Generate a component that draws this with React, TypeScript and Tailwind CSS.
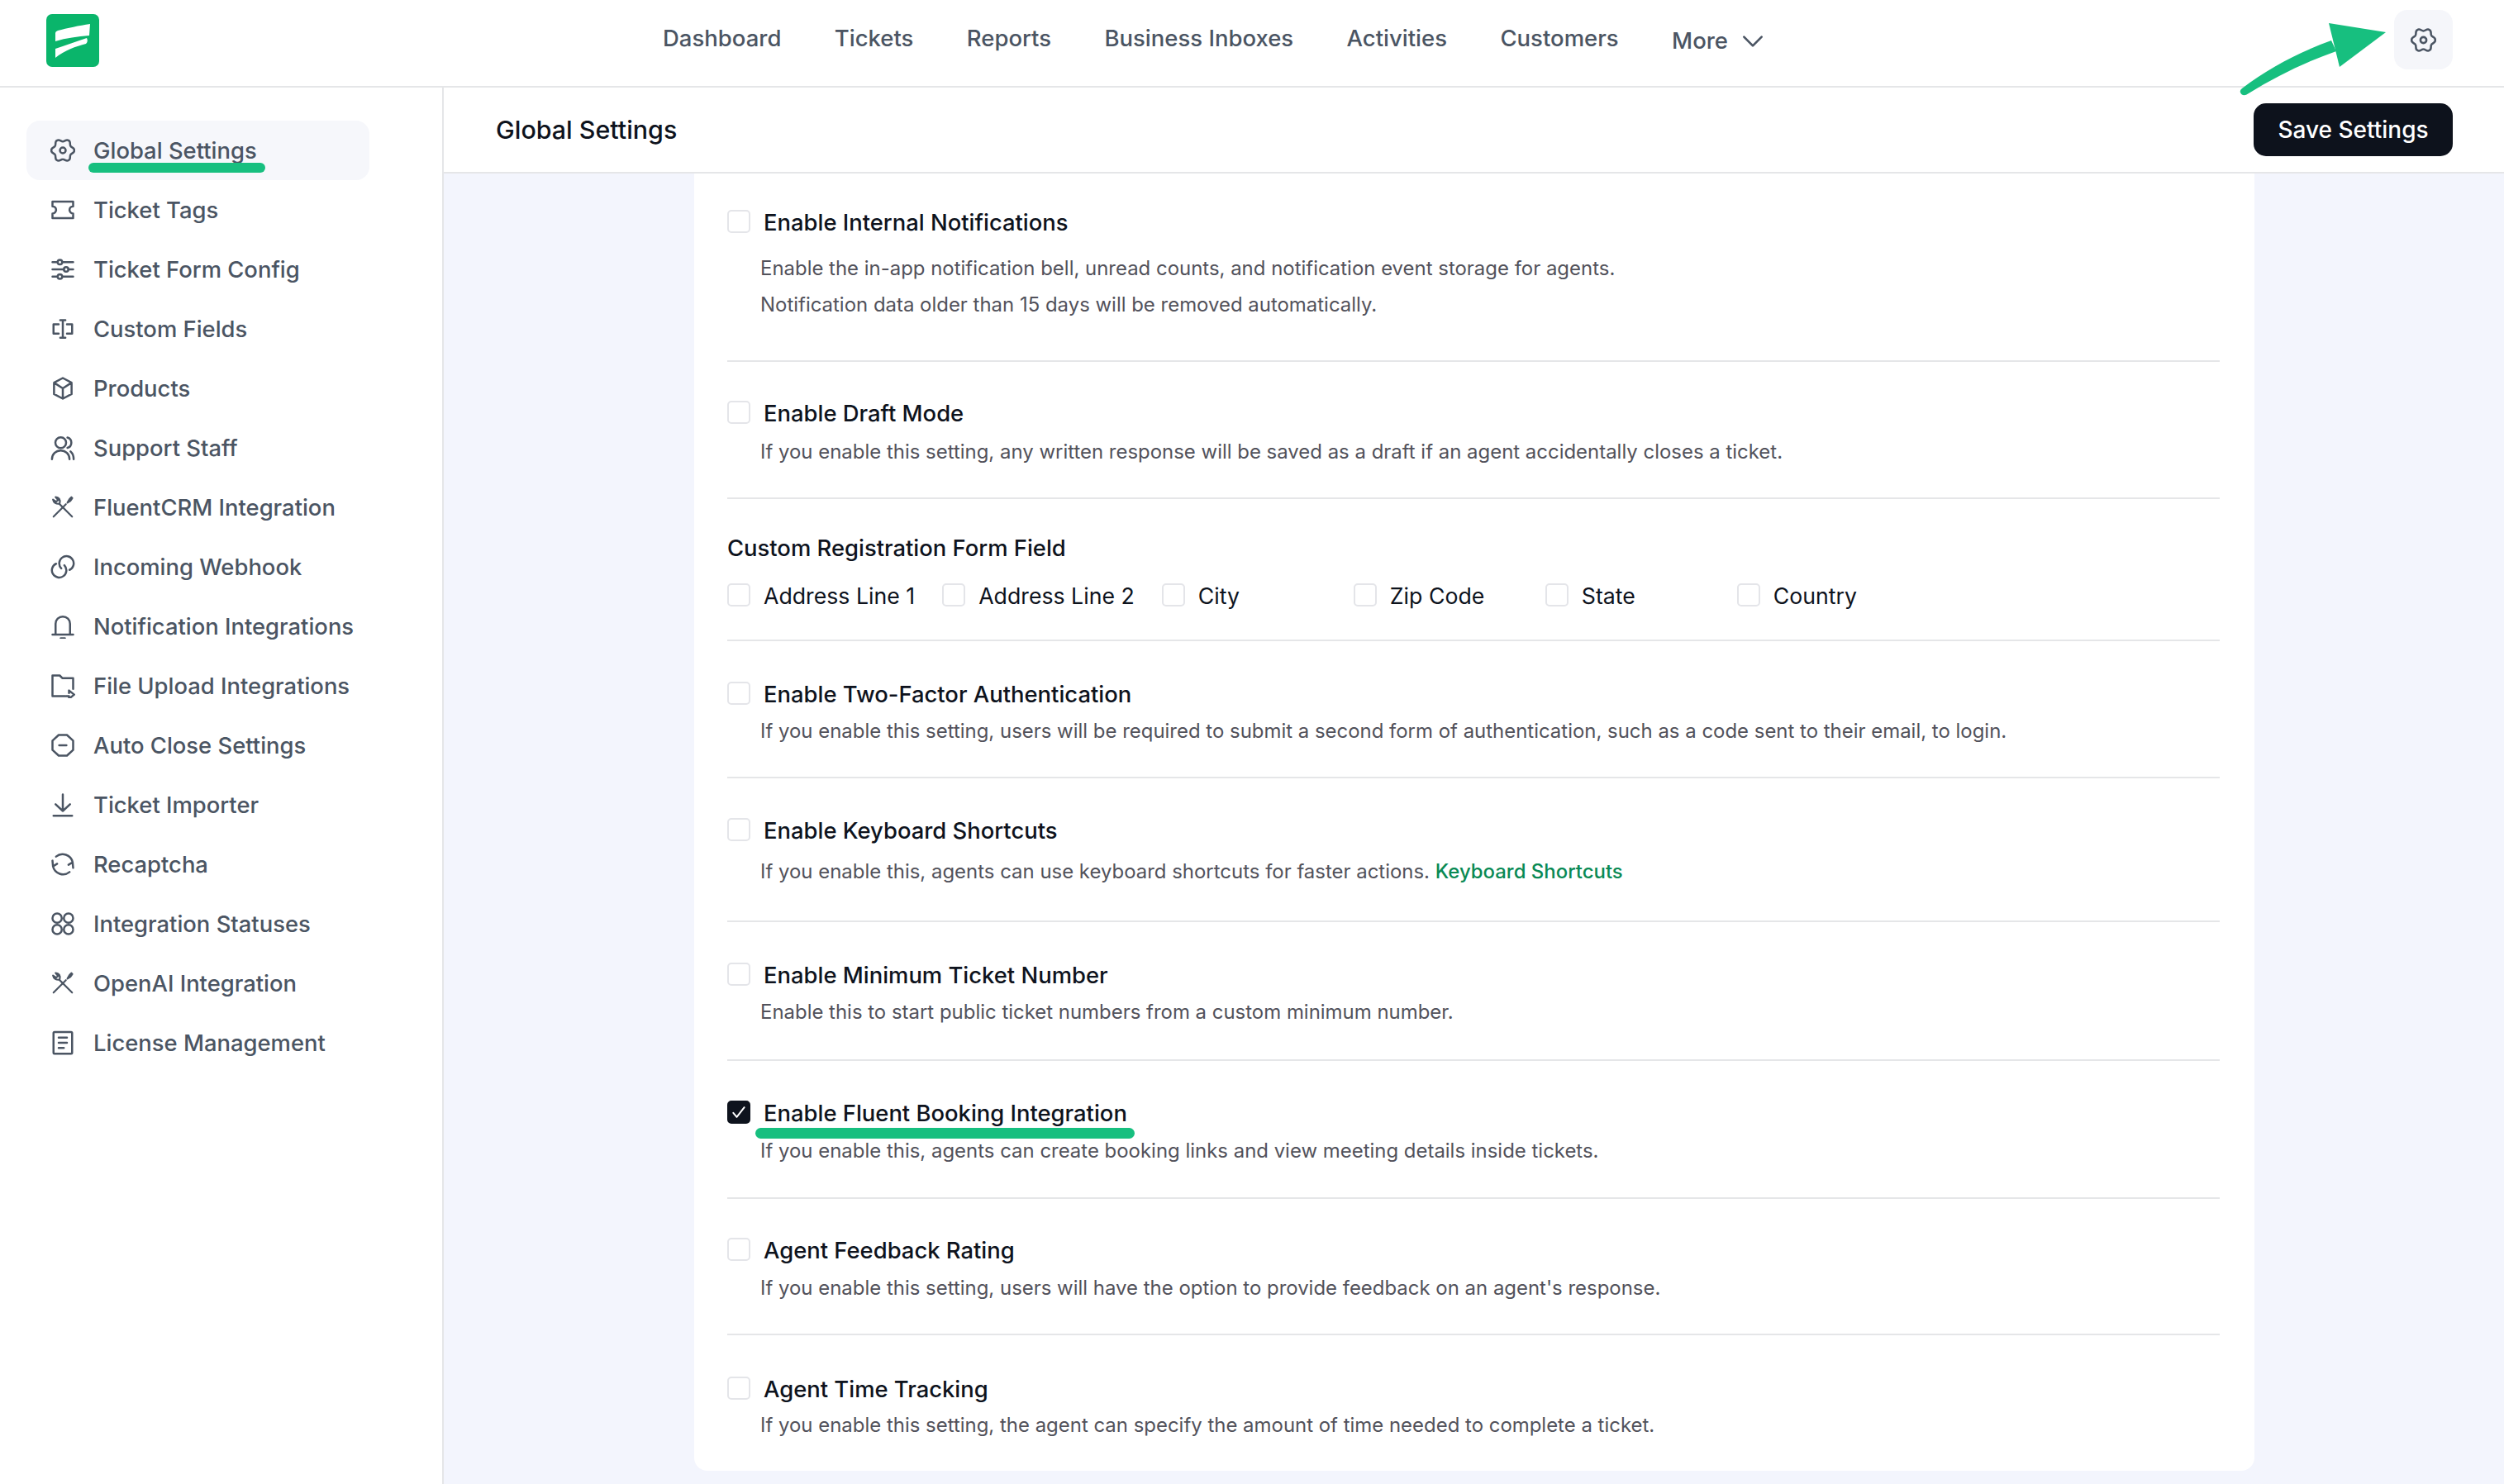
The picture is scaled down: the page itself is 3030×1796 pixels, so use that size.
import type { ReactNode } from 'react';

const wavyGear = (() => {
  // six soft lobes around the centre of a 24 box
  const pt = (deg: number, r: number) => {
    const a = (deg * Math.PI) / 180;
    return `${(12 + r * Math.cos(a)).toFixed(2)} ${(12 + r * Math.sin(a)).toFixed(2)}`;
  };
  let d = `M${pt(0, 11)}`;
  for (let i = 0; i < 6; i++) {
    const s = i * 60;
    d += ` C${pt(s + 12, 12)} ${pt(s + 20, 8.4)} ${pt(s + 30, 8.6)} C${pt(s + 40, 8.4)} ${pt(s + 48, 12)} ${pt(s + 60, 11)}`;
  }
  return d + 'Z';
})();

function Icon({ children, className = 'w-[30px] h-[30px]' }: { children: ReactNode; className?: string }) {
  return (
    <svg
      viewBox="0 0 24 24"
      fill="none"
      stroke="currentColor"
      strokeWidth={2}
      strokeLinecap="round"
      strokeLinejoin="round"
      className={`${className} shrink-0`}
    >
      {children}
    </svg>
  );
}

const GearIcon = () => (
  <>
    <path d={wavyGear} />
    <circle cx="12" cy="12" r="2.800" />
  </>
);

const ToolsIcon = () => (
  <g strokeWidth={1.7}>
    <path d="M21 21 8.500 8.500C6 9 3 7.500 2.500 4.500L5.500 6.500 7.500 5 5 2C8 2 10 4.500 9 8" />
    <path d="M3 21 15 9M16.500 7.500 18.500 4l1.800-1.800.900.900-1.700 2.500z" />
  </g>
);

const NAV_ICONS: Record<string, ReactNode> = {
  'Global Settings': <GearIcon />,
  'Ticket Tags': <path d="M2 4h20v4.500a3.500 3.500 0 0 0 0 7V20H2v-4.500a3.500 3.500 0 0 0 0-7z" />,
  'Ticket Form Config': (
    <>
      <path d="M2 5h5M11.500 5H22M2 12h11M17.500 12H22M2 19h5M11.500 19H22" />
      <circle cx="9.200" cy="5" r="2.200" />
      <circle cx="15.200" cy="12" r="2.200" />
      <circle cx="9.200" cy="19" r="2.200" />
    </>
  ),
  'Custom Fields': (
    <path d="M9.500 3.500h5M9.500 20.500h5M12 3.500v17M8 7.500H3v9h5M16 7.500h5v9h-5" />
  ),
  Products: (
    <path d="M12 2 20.500 6.500v11L12 22l-8.500-4.500v-11zM3.500 6.500 12 12l8.500-5.500M12 12v10" />
  ),
  'Support Staff': (
    <>
      <circle cx="10" cy="7" r="5.200" />
      <path d="M1.500 23a8.500 8.500 0 0 1 17 0M16.500 2a5.200 5.200 0 0 1 0 10M19.500 15.500c1.800 1.600 3 4.200 3 7.500" />
    </>
  ),
  'FluentCRM Integration': <ToolsIcon />,
  'Incoming Webhook': (
    <path d="M10.500 13.500A7 7 0 1 1 18.500 15M13.500 10.500A7 7 0 1 1 5.500 9" />
  ),
  'Notification Integrations': <path d="M5 20V9.500a7 7 0 0 1 14 0V20M2 20h20M10 23.500h4" />,
  'File Upload Integrations': (
    <path d="M22 15V4.500H11.500L9 2H2v20h12M18 16.500l5 4-5 4v-2.500h-3M18 16.500V19" />
  ),
  'Auto Close Settings': (
    <>
      <path d="M8 2h8l6 5.500v9L16 22H8l-6-5.500v-9z" />
      <path d="M8.500 12h7" />
    </>
  ),
  'Ticket Importer': <path d="M12 2v16M5 11.500l7 6.500 7-6.500M3 22.500h18" />,
  Recaptcha: (
    <path d="M5.500 4.500A10 10 0 0 1 21.500 10M18.500 19.500A10 10 0 0 1 2.500 14M2 8.500l.500 5.500 4-2.500M22 15.500l-.500-5.500-4 2.500" />
  ),
  'Integration Statuses': (
    <>
      <circle cx="6.500" cy="6.500" r="4.500" />
      <circle cx="17.500" cy="6.500" r="4.500" />
      <circle cx="6.500" cy="17.500" r="4.500" />
      <circle cx="17.500" cy="17.500" r="4.500" />
    </>
  ),
  'OpenAI Integration': <ToolsIcon />,
  'License Management': (
    <>
      <rect x="3" y="1.500" width="18" height="21" rx="1" />
      <path d="M8 7h8M8 12h8M8 17h5" />
    </>
  ),
};

const NAV_LABELS = Object.keys(NAV_ICONS);

const TOP_LINKS = ['Dashboard', 'Tickets', 'Reports', 'Business Inboxes', 'Activities', 'Customers'];

function Checkbox({ checked = false }: { checked?: boolean }) {
  return (
    <span
      className={`w-[28px] h-[28px] shrink-0 rounded-[5px] flex items-center justify-center border-2 ${
        checked ? 'bg-[#0e131d] border-[#0e131d]' : 'bg-white border-[#e4e5e9]'
      }`}
    >
      {checked && (
        <svg viewBox="0 0 24 24" fill="none" stroke="#fff" strokeWidth={2.4} strokeLinecap="round" strokeLinejoin="round" className="w-[20px] h-[20px]">
          <path d="M4 13l5 6L20 5" />
        </svg>
      )}
    </span>
  );
}

function Setting({
  title,
  checked,
  children,
  className,
  bodyClass,
  underline,
}: {
  title: string;
  checked?: boolean;
  children: ReactNode;
  className: string;
  bodyClass: string;
  underline?: boolean;
}) {
  return (
    <div className={className}>
      <label className="flex items-center gap-[16px] h-[40px]">
        <Checkbox checked={checked} />
        <span className="relative pt-[3px] text-[27.4px] font-medium text-[#0e131d] whitespace-nowrap">
          {title}
          {underline && (
            <span className="absolute left-[-10px] right-[-9px] top-[41px] h-[13px] rounded-full bg-[#17bf7f]" />
          )}
        </span>
      </label>
      <div className={`ml-[40px] pt-[1px] -mb-[1px] text-[23.95px] leading-[44px] text-[#52525b] ${bodyClass}`}>{children}</div>
    </div>
  );
}

export default function App() {
  return (
    <div className="relative h-screen overflow-hidden flex flex-col bg-white font-['Inter',sans-serif]">
      {/* Top bar */}
      <header className="h-[106px] shrink-0 flex items-center border-b-2 border-[#e5e6e8]">
        <div className="ml-[56px] mb-[6px] w-[64px] h-[64px] rounded-[7px] bg-[#0ab56b]">
          <svg viewBox="0 0 64 64" className="w-full h-full" fill="#fff">
            <path d="M11 23Q11 21 14 20C25 17 40 14 53 12L52 26C38 27 24 29 11 33Z" />
            <path d="M11 42C24 38 36 33 49 29Q51 33 48 36C36 39 22 44 11 53Z" />
          </svg>
        </div>
        <nav className="ml-[682px] flex items-center gap-[64.4px] text-[27.5px] font-medium text-[#4b5563] pb-[10px]">
          {TOP_LINKS.map((link) => (
            <a key={link} className="whitespace-nowrap">
              {link}
            </a>
          ))}
          <a className="flex items-center gap-[14px] pt-[6px]">
            More
            <svg viewBox="0 0 24 24" fill="none" stroke="currentColor" strokeWidth={2} strokeLinecap="round" strokeLinejoin="round" className="w-[32px] h-[32px]">
              <path d="M4 8l8 8 8-8" />
            </svg>
          </a>
        </nav>
        <button className="ml-auto mr-[62px] w-[71px] h-[72px] mb-[8px] rounded-[16px] bg-[#f5f6fa] text-[#4b5563] flex items-center justify-center">
          <Icon className="w-[31px] h-[31px]">
            <GearIcon />
          </Icon>
        </button>
      </header>

      <div className="flex-1 flex min-h-0">
        {/* Sidebar */}
        <aside className="w-[537px] shrink-0 border-r-2 border-[#e5e6e8] pt-[40px] pl-[32px]">
          {NAV_LABELS.map((label, i) => (
            <div
              key={label}
              className={`w-[415px] h-[72px] flex items-center gap-[22px] pl-[29px] rounded-[16px] text-[27.4px] font-medium text-[#4b5563] ${
                i === 0 ? 'bg-[#f6f7fb]' : ''
              }`}
            >
              <Icon>{NAV_ICONS[label]}</Icon>
              <span className="relative pt-[2px] whitespace-nowrap">
                {label}
                {i === 0 && (
                  <span className="absolute left-[-6px] right-[-10px] top-[37px] h-[12px] rounded-full bg-[#17bf7f]" />
                )}
              </span>
            </div>
          ))}
        </aside>

        {/* Main */}
        <main className="flex-1 min-w-0 flex flex-col bg-[#f3f5fd]">
          <div className="h-[104px] shrink-0 bg-white border-b-2 border-[#e5e6e8] flex items-center justify-between pl-[63px] pr-[62px]">
            <h1 className="mt-[2px] text-[30.4px] font-medium text-[#0e131d]">Global Settings</h1>
            <button className="w-[241px] h-[64px] rounded-[15px] bg-[#0d121c] text-white text-[28px] font-medium">
              Save Settings
            </button>
          </div>

          <div className="ml-[303px] w-[1888px] h-[1570px] bg-white rounded-b-[16px] pl-[40px] pr-[42px] flex flex-col">
            <Setting title="Enable Internal Notifications" className="pt-[38px] pb-[46px] border-b-2 border-[#e5e6e8]" bodyClass="mt-[14px]">
              <p>Enable the in-app notification bell, unread counts, and notification event storage for agents.</p>
              <p>Notification data older than 15 days will be removed automatically.</p>
            </Setting>

            <Setting title="Enable Draft Mode" className="pt-[41px] pb-[34px] border-b-2 border-[#e5e6e8]" bodyClass="mt-[5px]">
              If you enable this setting, any written response will be saved as a draft if an agent accidentally closes a ticket.
            </Setting>

            <div className="pt-[38px] pb-[34px] border-b-2 border-[#e5e6e8]">
              <h3 className="h-[40px] leading-[42px] text-[27.4px] font-medium text-[#0e131d]">Custom Registration Form Field</h3>
              <div className="mt-[18px] flex gap-[33px] text-[26.7px] text-[#0e131d]">
                {['Address Line 1', 'Address Line 2', 'City', 'Zip Code', 'State', 'Country'].map((f) => (
                  <label key={f} className="flex items-center gap-[16px] h-[40px] min-w-[199px] whitespace-nowrap">
                    <Checkbox />
                    <span className="pt-[2px]">{f}</span>
                  </label>
                ))}
              </div>
            </div>

            <Setting title="Enable Two-Factor Authentication" className="pt-[43px] pb-[34px] border-b-2 border-[#e5e6e8]" bodyClass="mt-[3px]">
              If you enable this setting, users will be required to submit a second form of authentication, such as a code sent to their email, to login.
            </Setting>

            <Setting title="Enable Keyboard Shortcuts" className="pt-[42px] pb-[38px] border-b-2 border-[#e5e6e8]" bodyClass="mt-[8px]">
              If you enable this, agents can use keyboard shortcuts for faster actions.{' '}
              <a className="font-medium text-[#0a8a55]">Keyboard Shortcuts</a>
            </Setting>

            <Setting title="Enable Minimum Ticket Number" className="pt-[43px] pb-[36px] border-b-2 border-[#e5e6e8]" bodyClass="mt-[3px]">
              Enable this to start public ticket numbers from a custom minimum number.
            </Setting>

            <Setting title="Enable Fluent Booking Integration" checked underline className="pt-[42px] pb-[35px] border-b-2 border-[#e5e6e8]" bodyClass="mt-[4px]">
              If you enable this, agents can create booking links and view meeting details inside tickets.
            </Setting>

            <Setting title="Agent Feedback Rating" className="pt-[41px] pb-[34px] border-b-2 border-[#e5e6e8]" bodyClass="mt-[4px]">
              If you enable this setting, users will have the option to provide feedback on an agent's response.
            </Setting>

            <Setting title="Agent Time Tracking" className="pt-[44px]" bodyClass="mt-[2px]">
              If you enable this setting, the agent can specify the amount of time needed to complete a ticket.
            </Setting>
          </div>
        </main>
      </div>

      {/* Annotation arrow pointing at the settings gear */}
      <svg viewBox="0 0 200 100" className="absolute left-[2700px] top-[20px] w-[200px] h-[100px]" fill="#17bf7f">
        <path d="M13 87C45 62 85 42 121 29L127 42C90 55 55 72 21 93Q14 98 11 92Q10 89 13 87Z" />
        <path d="M118 8 187 19 131 61z" />
      </svg>
    </div>
  );
}
